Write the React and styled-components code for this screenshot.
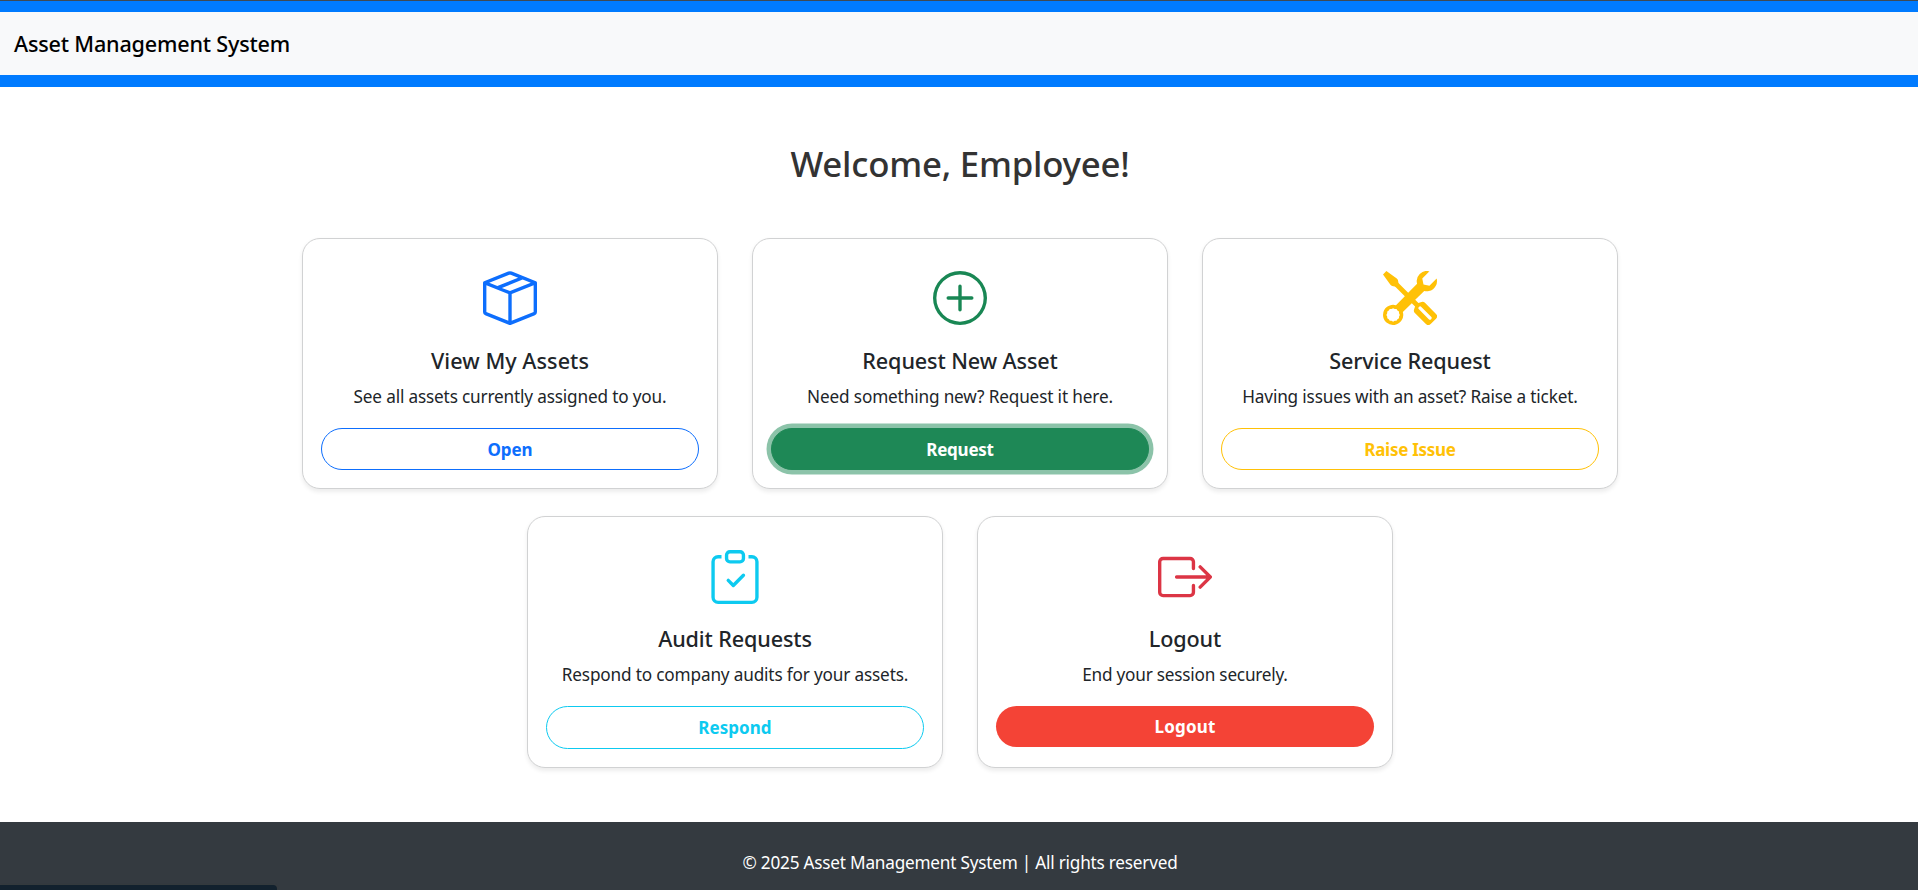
import React from "react";
import styled, { createGlobalStyle, css } from "styled-components";
import { BsBoxSeam, BsPlusCircle, BsTools, BsClipboardCheck, BsBoxArrowRight } from "react-icons/bs";

const GlobalStyle = createGlobalStyle`
  *, *::before, *::after { box-sizing: border-box; }
  html, body { height: 100%; overflow: hidden; }
  body {
    margin: 0;
    background: #fff;
    color: #212529;
    font-family: "Segoe UI", "Noto Sans", sans-serif;
  }
`;

const Page = styled.div`
  position: relative;
  display: flex;
  flex-direction: column;
  width: 1920px;
  height: 890px;
`;

const Header = styled.header`
  height: 87px;
  padding: 11px 0 12px;
  background: #007bff;
  border-top: 1px solid #3f4a54;
`;

const Navbar = styled.nav`
  display: flex;
  align-items: center;
  height: 63px;
  padding: 0 13px 0 14px;
  background: #f8f9fa;
`;

const Brand = styled.span`
  color: #000;
  font-size: 21.6px;
  font-weight: 500;
  line-height: 34px;
  letter-spacing: -0.19px;
`;

const Main = styled.main`
  flex: 1;
  display: flex;
  flex-direction: column;
  align-items: center;
  padding-top: 55px;
`;

const Heading = styled.h2`
  margin: 0 0 53px;
  color: #333;
  font-size: 34.8px;
  font-weight: 500;
  line-height: 43px;
  letter-spacing: -0.22px;
`;

const CardRows = styled.div`
  display: flex;
  flex-direction: column;
  gap: 27px;
`;

const CardRow = styled.div`
  display: flex;
  justify-content: center;
  gap: 34px;
`;

const Card = styled.section`
  display: flex;
  flex-direction: column;
  align-items: center;
  width: 416px;
  height: ${(p) => p.$height}px;
  padding: ${(p) => p.$height - 219}px 18px 0;
  background: #fff;
  border: 1px solid #d1d2d3;
  border-radius: 18px;
  box-shadow: 0 2.25px 4.5px rgba(0, 0, 0, 0.075);
`;

const IconSlot = styled.div`
  height: 54px;
  margin-bottom: ${(p) => p.$gap}px;
  color: ${(p) => p.$color};
  font-size: 54px;
  line-height: 0;
`;

const CardTitle = styled.h5`
  margin: 0 0 9px;
  font-size: 21.6px;
  font-weight: 500;
  line-height: 27px;
  letter-spacing: ${(p) => p.$track}px;
`;

const CardText = styled.p`
  margin: 0 0 18px;
  font-size: 17.2px;
  line-height: 27px;
  letter-spacing: ${(p) => p.$track}px;
`;

const variants = {
  outline: css`
    color: ${(p) => p.$color};
    background: transparent;
    border: 1px solid ${(p) => p.$color};
  `,
  focused: css`
    color: #fff;
    background: ${(p) => p.$color};
    border: 1px solid ${(p) => p.$color};
    box-shadow: 0 0 0 4.5px rgba(25, 135, 84, 0.5);
  `,
  solid: css`
    color: #fff;
    background: ${(p) => p.$color};
    border: 0;
  `,
};

const ActionButton = styled.button`
  align-self: stretch;
  display: flex;
  align-items: center;
  justify-content: center;
  height: ${(p) => p.$height}px;
  padding: 0;
  border-radius: 22px;
  font-family: inherit;
  font-size: 17px;
  font-weight: 700;
  line-height: 27px;
  letter-spacing: ${(p) => p.$track}px;
  ${(p) => variants[p.$variant]}
`;

const Footer = styled.footer`
  display: flex;
  justify-content: center;
  height: 68px;
  padding-top: 27px;
  background: #343a40;
  color: #fff;
  font-size: 17.2px;
  line-height: 27px;
  letter-spacing: -0.22px;
`;

const StatusBubble = styled.div`
  position: absolute;
  left: 0;
  bottom: 0;
  width: 277px;
  height: 5px;
  background: #12212e;
  border-top-right-radius: 4px;
  box-shadow: 0 0 2px rgba(58, 60, 58, 0.9);
`;

const rows = [
  {
    height: 251,
    iconGap: 22,
    cards: [
      { Icon: BsBoxSeam, color: "#0d6efd", title: "View My Assets", titleTrack: 0.05, text: "See all assets currently assigned to you.", textTrack: -0.17, action: "Open", actionTrack: -0.1, variant: "outline", buttonHeight: 42 },
      { Icon: BsPlusCircle, color: "#198754", title: "Request New Asset", titleTrack: -0.11, text: "Need something new? Request it here.", textTrack: -0.15, action: "Request", actionTrack: -0.23, variant: "focused", buttonColor: "#1e8856", buttonHeight: 42 },
      { Icon: BsTools, color: "#ffc107", title: "Service Request", titleTrack: -0.13, text: "Having issues with an asset? Raise a ticket.", textTrack: -0.17, action: "Raise Issue", actionTrack: -0.27, variant: "outline", buttonHeight: 42 },
    ],
  },
  {
    height: 252,
    iconGap: 21,
    cards: [
      { Icon: BsClipboardCheck, color: "#0dcaf0", title: "Audit Requests", titleTrack: -0.12, text: "Respond to company audits for your assets.", textTrack: -0.166, action: "Respond", actionTrack: 0.05, variant: "outline", buttonHeight: 43 },
      { Icon: BsBoxArrowRight, color: "#dc3545", title: "Logout", titleTrack: -0.12, text: "End your session securely.", textTrack: -0.22, action: "Logout", actionTrack: 0.18, variant: "solid", buttonColor: "#f44336", buttonHeight: 41 },
    ],
  },
];

export default function App() {
  return (
    <>
      <GlobalStyle />
      <Page>
        <Header>
          <Navbar>
            <Brand>Asset Management System</Brand>
          </Navbar>
        </Header>
        <Main>
          <Heading>Welcome, Employee!</Heading>
          <CardRows>
            {rows.map((row) => (
              <CardRow key={row.height}>
                {row.cards.map((c) => (
                  <Card key={c.title} $height={row.height}>
                    <IconSlot $color={c.color} $gap={row.iconGap}>
                      <c.Icon />
                    </IconSlot>
                    <CardTitle $track={c.titleTrack}>{c.title}</CardTitle>
                    <CardText $track={c.textTrack}>{c.text}</CardText>
                    <ActionButton
                      $variant={c.variant}
                      $color={c.buttonColor || c.color}
                      $track={c.actionTrack}
                      $height={c.buttonHeight}
                    >
                      {c.action}
                    </ActionButton>
                  </Card>
                ))}
              </CardRow>
            ))}
          </CardRows>
        </Main>
        <Footer>© 2025 Asset Management System | All rights reserved</Footer>
        <StatusBubble />
      </Page>
    </>
  );
}
